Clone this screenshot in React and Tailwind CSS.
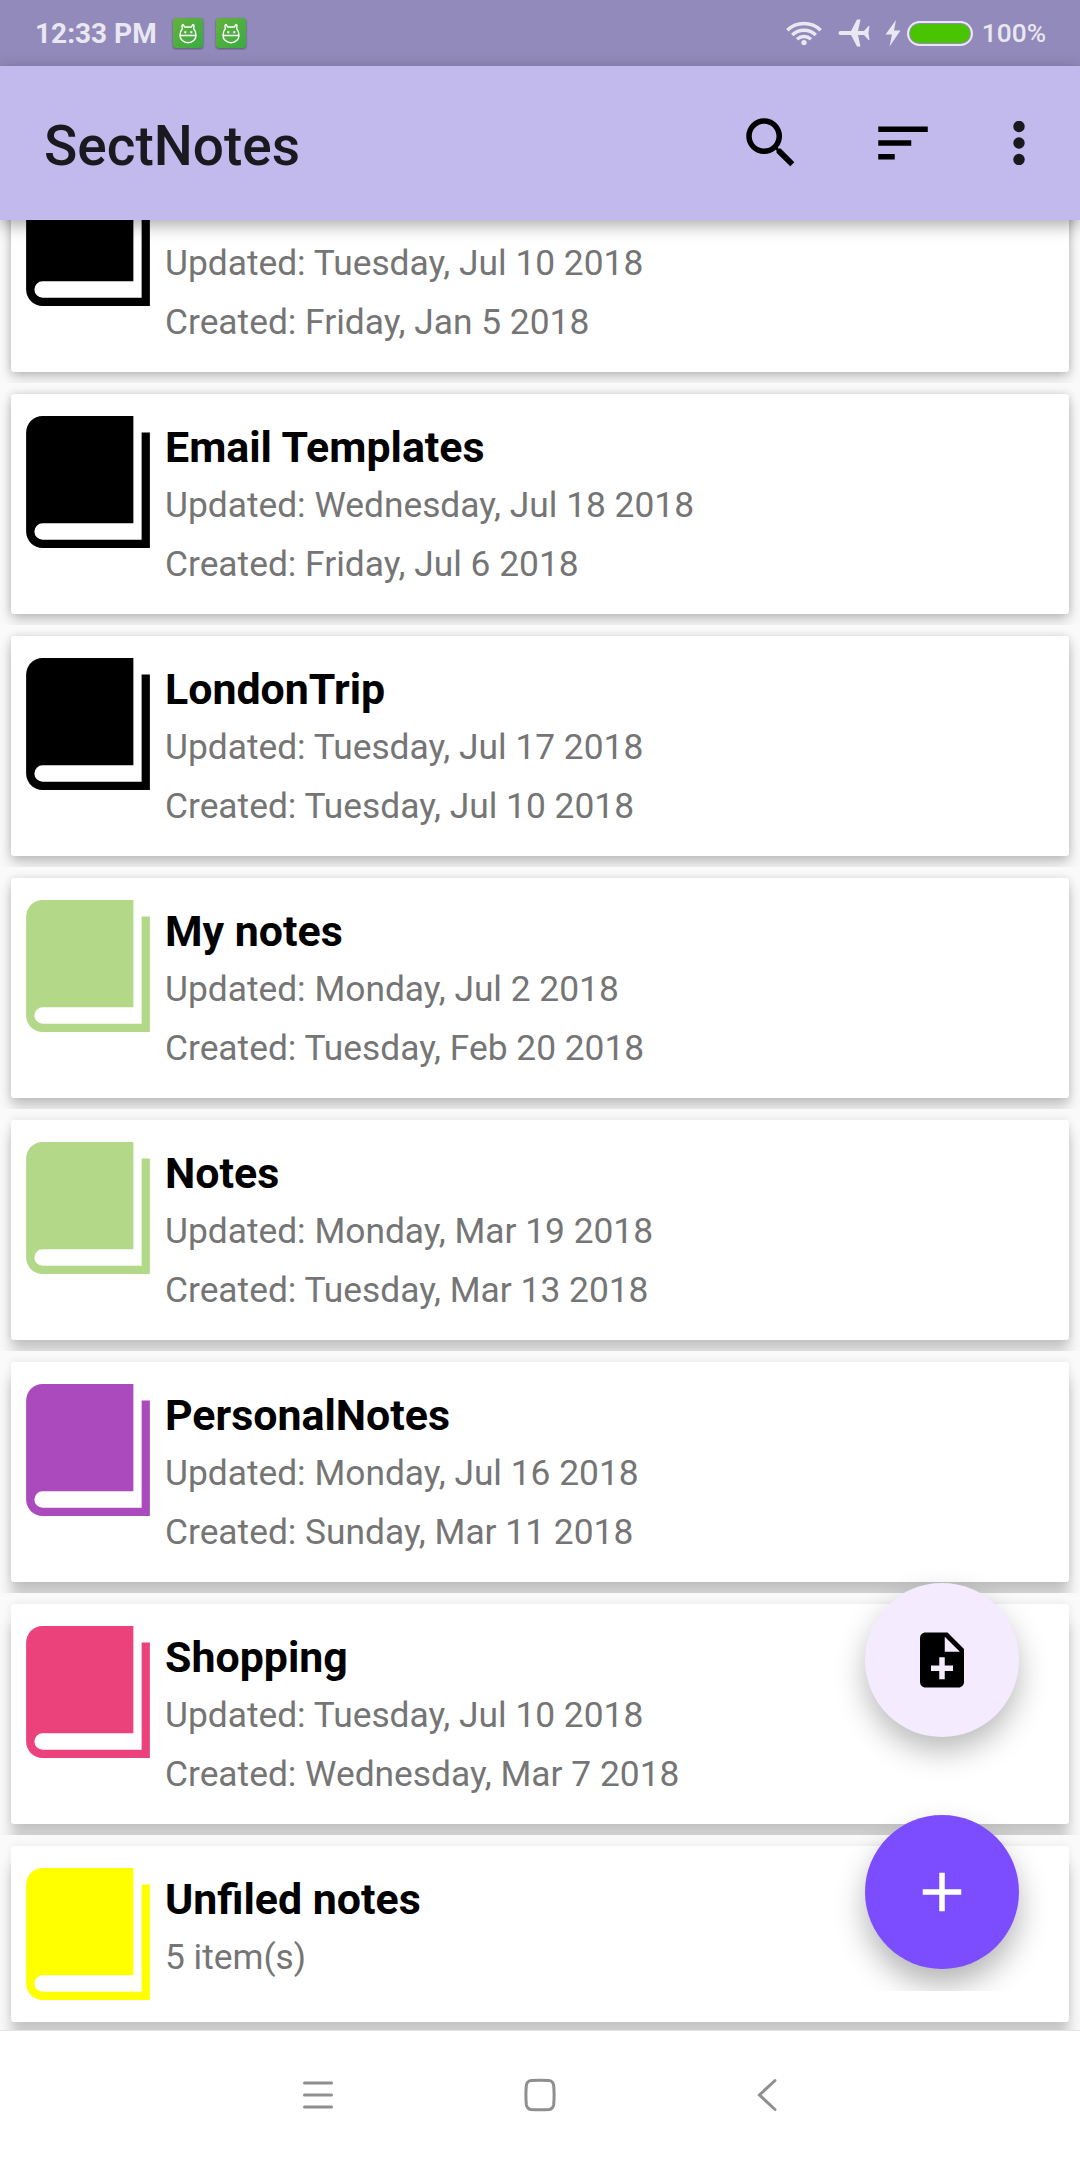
const notebooks = [
  { id: 1, name: "Book", lines: ["Updated: Tuesday, Jul 10 2018", "Created: Friday, Jan 5 2018"], color: "text-black", shadow: "shadow-[0_0_8px_rgba(0,0,0,0.18),0_6px_14px_rgba(0,0,0,0.18)]" },
  { id: 2, name: "Email Templates", lines: ["Updated: Wednesday, Jul 18 2018", "Created: Friday, Jul 6 2018"], color: "text-black", shadow: "shadow-[0_0_8px_rgba(0,0,0,0.17),0_7px_14px_rgba(0,0,0,0.18)]" },
  { id: 3, name: "LondonTrip", lines: ["Updated: Tuesday, Jul 17 2018", "Created: Tuesday, Jul 10 2018"], color: "text-black", shadow: "shadow-[0_0_8px_rgba(0,0,0,0.15),0_8px_14px_rgba(0,0,0,0.19)]" },
  { id: 4, name: "My notes", lines: ["Updated: Monday, Jul 2 2018", "Created: Tuesday, Feb 20 2018"], color: "text-[#b2d888]", shadow: "shadow-[0_0_8px_rgba(0,0,0,0.13),0_10px_14px_rgba(0,0,0,0.19)]" },
  { id: 5, name: "Notes", lines: ["Updated: Monday, Mar 19 2018", "Created: Tuesday, Mar 13 2018"], color: "text-[#b2d888]", shadow: "shadow-[0_0_8px_rgba(0,0,0,0.11),0_13px_14px_rgba(0,0,0,0.19)]" },
  { id: 6, name: "PersonalNotes", lines: ["Updated: Monday, Jul 16 2018", "Created: Sunday, Mar 11 2018"], color: "text-[#ab4abd]", shadow: "shadow-[0_0_8px_rgba(0,0,0,0.09),0_17px_14px_rgba(0,0,0,0.2)]" },
  { id: 7, name: "Shopping", lines: ["Updated: Tuesday, Jul 10 2018", "Created: Wednesday, Mar 7 2018"], color: "text-[#ec427b]", shadow: "shadow-[0_0_8px_rgba(0,0,0,0.08),0_20px_14px_rgba(0,0,0,0.19)]" },
  { id: 8, name: "Unfiled notes", lines: ["5 item(s)"], color: "text-[#ffff00]", shadow: "shadow-[0_0_8px_rgba(0,0,0,0.07),0_20px_14px_rgba(0,0,0,0.19)]" },
];

function BookIcon({ className }) {
  return (
    <svg className={className} viewBox="0 0 15 16" fill="currentColor">
      <path d="M2 0H13V13H2a1 1 0 0 0 0 2H14V2H15V16H2a2 2 0 0 1-2-2V2a2 2 0 0 1 2-2z" />
    </svg>
  );
}

function AppBadge() {
  return (
    <svg className="h-[30px] w-[30px] drop-shadow-[0_1px_1px_rgba(0,0,0,0.4)]" viewBox="0 0 30 30" fill="none">
      <defs>
        <linearGradient id="badge" x1="0" y1="0" x2="1" y2="1">
          <stop offset="0" stopColor="#64b23c" />
          <stop offset="1" stopColor="#38ab42" />
        </linearGradient>
      </defs>
      <rect width="30" height="30" rx="3" fill="url(#badge)" />
      <path
        d="M7 17.5H23M7 17.5c0-3 .6-5 2.3-6.800L9 7.500c.2-1.200 1.200-1.200 1.700-.2l1 1.700h6.600l1-1.700c.5-1 1.500-1 1.700.2l-.3 3.200c1.700 1.800 2.300 3.800 2.300 6.800a8 7.200 0 0 1-16 0z"
        stroke="#fff"
        strokeWidth="1.400"
      />
      <path d="M11.300 13.200h2v2h-2zM17.300 13.200h2v2h-2z" fill="#fff" />
    </svg>
  );
}

function StatusBar() {
  return (
    <div className="flex h-[66px] shrink-0 items-center bg-[#928aba] pl-[35px] pr-[34px] text-[#e9e7f1]">
      <span className="pt-px text-[28px] leading-[66px] font-bold">12:33 PM</span>
      <div className="ml-[16px] flex gap-[13px]">
        <AppBadge />
        <AppBadge />
      </div>
      <svg className="ml-auto h-[26px] w-[36px]" viewBox="0 0 36 26" fill="none" stroke="currentColor" strokeWidth="3.400">
        <path d="M1.300 10.300a24 24 0 0 1 33.400 0M6.200 15a17 17 0 0 1 23.600 0M11 19.200a10.500 10.500 0 0 1 14 0" />
        <circle cx="18" cy="22.600" r="2.700" fill="currentColor" stroke="none" />
      </svg>
      <svg className="ml-[16px] h-[28px] w-[32px]" viewBox="0 0 32 28" fill="currentColor">
        <path d="M2.500 12H13L19 .5H22.500L20 12h6l4.500-5H31.500L30.500 14l1 7H30.500L26 16H20l2.500 11.500H19L13 16H2.500a2 2 0 0 1 0-4z" />
      </svg>
      <svg className="ml-[15px] h-[28px] w-[16px]" viewBox="0 0 16 28" fill="currentColor">
        <path d="M11 1L.5 15.500H7L4.500 27.500 15.500 11.500H9z" />
      </svg>
      <div className="ml-[6px] h-[25px] w-[66px] rounded-full border-2 border-[#e9e7f1] p-px">
        <div className="h-full w-full rounded-full bg-[#49c400]" />
      </div>
      <span className="ml-[9px] text-[26.3px] leading-[66px] font-medium">100%</span>
    </div>
  );
}

function AppBar() {
  return (
    <header className="relative z-10 flex h-[154px] shrink-0 items-center bg-[#c2b9ec] pl-[44px] pr-[55px] shadow-[0_5px_16px_rgba(0,0,0,0.34)]">
      <h1 className="pt-[6px] text-[55px] leading-[66px] font-medium text-[#1a191f]">SectNotes</h1>
      <svg className="ml-auto h-[66px] w-[66px]" viewBox="0 0 24 24">
        <path d="M15.500 14h-.79l-.28-.27A6.471 6.471 0 0 0 16 9.500 6.500 6.500 0 1 0 9.500 16c1.610 0 3.090-.59 4.230-1.570l.27.28v.79l5 4.990L20.490 19l-4.990-5zm-6 0C7.010 14 5 11.990 5 9.500S7.010 5 9.500 5 14 7.010 14 9.500 11.990 14 9.500 14z" />
      </svg>
      <svg className="ml-[66px] h-[66px] w-[66px]" viewBox="0 0 24 24">
        <path d="M3 18h6v-2H3v2zM3 6v2h18V6H3zm0 7h12v-2H3v2z" />
      </svg>
      <svg className="ml-[77px] h-[44px] w-[12px]" viewBox="0 0 12 44" fill="#1a191f">
        <circle cx="6" cy="5.500" r="5.700" />
        <circle cx="6" cy="22" r="5.700" />
        <circle cx="6" cy="38.500" r="5.700" />
      </svg>
    </header>
  );
}

function NotebookCard({ notebook }) {
  return (
    <li className="overflow-hidden bg-[#fafafa] p-[11px]">
      <div className={`flex rounded-[3px] bg-white pl-[15px] ${notebook.lines.length > 1 ? "h-[220px]" : "h-[176px]"} ${notebook.shadow}`}>
        <BookIcon className={`mt-[22px] h-[132px] w-[124px] ${notebook.color}`} />
        <div className="ml-[15px] pt-[27px]">
          <h2 className="text-[42.9px] leading-[52px] font-bold text-black">{notebook.name}</h2>
          <div className="mt-[11px] space-y-[17px] text-[35.35px] leading-[42px] text-[#757575]">
            {notebook.lines.map((line) => (
              <p key={line}>{line}</p>
            ))}
          </div>
        </div>
      </div>
    </li>
  );
}

function NavBar() {
  return (
    <nav className="relative z-20 flex h-[130px] shrink-0 items-center border-t border-[#e3e3e3] bg-white pb-[2px] pl-[303px] text-[#8f8f8f]">
      <svg className="h-[32px] w-[30px]" viewBox="0 0 30 32" stroke="currentColor" strokeWidth="3" strokeLinecap="round">
        <path d="M1.500 4H28.500M1.500 16H28.500M1.500 28H28.500" />
      </svg>
      <svg className="ml-[191px] h-[34px] w-[32px]" viewBox="0 0 32 34" fill="none" stroke="currentColor" strokeWidth="3">
        <path d="M7 2.500Q16 1.800 25 2.500 29 3 29.700 7.500 30.500 17 29.700 26.500 29 31 25 31.500 16 32.200 7 31.500 3 31 2.300 26.500 1.500 17 2.300 7.500 3 3 7 2.500z" />
      </svg>
      <svg className="ml-[201px] h-[34px] w-[20px]" viewBox="0 0 20 34" fill="none" stroke="currentColor" strokeWidth="3" strokeLinecap="round">
        <path d="M18 2.500L2.500 17L18 31.500" />
      </svg>
    </nav>
  );
}

export default function App() {
  return (
    <div className="relative flex h-[2160px] w-[1080px] flex-col overflow-hidden bg-[#fafafa] font-[Roboto,sans-serif]">
      <StatusBar />
      <AppBar />

      {/* List is scrolled, the first notebook sits partly under the app bar */}
      <main className="flex-1 overflow-hidden">
        <ul className="-mt-[79px]">
          {notebooks.map((notebook) => (
            <NotebookCard key={notebook.id} notebook={notebook} />
          ))}
        </ul>
      </main>

      {/* Floating buttons */}
      <div className="absolute top-[1560px] right-[20px] flex h-[431px] w-[236px] flex-col items-center overflow-hidden pt-[23px]">
        <button className="flex h-[154px] w-[154px] shrink-0 items-center justify-center rounded-full bg-[#f4ebff] shadow-[0_14px_30px_rgba(0,0,0,0.27)]">
          <svg className="h-[66px] w-[66px]" viewBox="0 0 24 24">
            <path d="M14 2H6c-1.100 0-1.990.9-1.990 2L4 20c0 1.100.89 2 1.990 2H18c1.100 0 2-.9 2-2V8l-6-6zm2 14h-3v3h-2v-3H8v-2h3v-3h2v3h3v2zm-3-7V3.500L18.500 9H13z" />
          </svg>
        </button>
        <button className="mt-[78px] flex h-[154px] w-[154px] shrink-0 items-center justify-center rounded-full bg-[#7c4dff] shadow-[0_16px_30px_rgba(0,0,0,0.29)]">
          <svg className="h-[66px] w-[66px]" viewBox="0 0 24 24" fill="#fff">
            <path d="M19 13h-6v6h-2v-6H5v-2h6V5h2v6h6v2z" />
          </svg>
        </button>
      </div>

      <NavBar />
    </div>
  );
}
